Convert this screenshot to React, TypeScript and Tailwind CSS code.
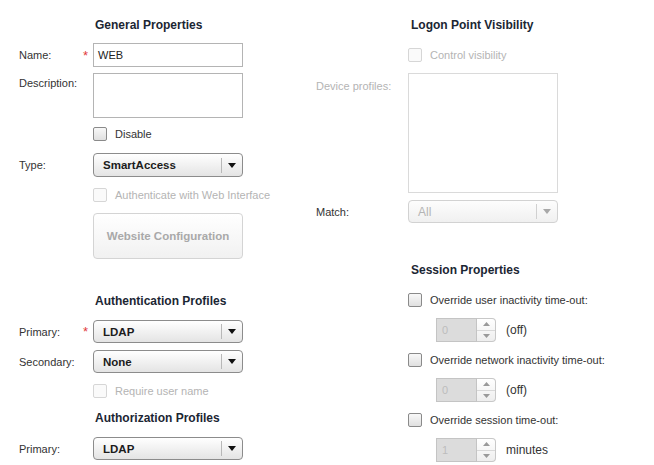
import React from 'react';

function Checkbox({ disabled }: { disabled?: boolean }) {
  return (
    <span
      className={`inline-block w-[14px] h-[14px] shrink-0 rounded-[2px] border ${
        disabled
          ? 'border-[#d6d6d6] bg-[#fafafa]'
          : 'border-[#8a8a8a] bg-linear-to-b from-[#f8f8f8] to-[#e0e0e0]'
      }`}
    />
  );
}

function CheckRow({ label, disabled }: { label: string; disabled?: boolean }) {
  return (
    <div className="flex items-center h-[14px] gap-[8px]">
      <Checkbox disabled={disabled} />
      <span className={disabled ? 'text-[#b4b4b4]' : 'text-[#333]'}>{label}</span>
    </div>
  );
}

function Select({ value, disabled, tall }: { value: string; disabled?: boolean; tall?: boolean }) {
  return (
    <div
      className={`flex items-center w-[150px] ${tall ? 'h-[24px]' : 'h-[23px]'} rounded-[4px] border ${
        disabled
          ? 'border-[#d2d2d2] bg-linear-to-b from-[#fdfdfd] to-[#f0f0f0]'
          : 'border-[#8c8c8c] bg-linear-to-b from-[#ffffff] to-[#e4e4e4]'
      }`}
    >
      <span className={`flex-1 pl-[9px] ${disabled ? 'text-[12px] text-[#b4b4b4]' : 'text-[11.5px] font-bold text-[#1c1c1c]'}`}>{value}</span>
      <span className={`w-px h-[15px] ${disabled ? 'bg-[#d0d0d0]' : 'bg-[#b8b8b8]'}`} />
      <span className="w-[20px] flex justify-center">
        <svg width="8" height="5" viewBox="0 0 8 5">
          <path d="M0 0h8L4 5z" fill={disabled ? '#a8a8a8' : '#111'} />
        </svg>
      </span>
    </div>
  );
}

function Spinner({ value, unit }: { value: string; unit: string }) {
  return (
    <div className="flex items-center pl-[28px]">
      <div className="w-[41px] h-[24px] border border-[#c4c4c4] bg-[#dcdcdc] pl-[5px] leading-[22px] text-[#bcbcbc]">
        {value}
      </div>
      <div className="w-[19px] h-[24px] flex flex-col border border-l-0 border-[#c8c8c8] rounded-r-[4px] bg-linear-to-b from-[#ffffff] to-[#eeeeee]">
        <span className="flex-1 flex items-center justify-center border-b border-[#d8d8d8]">
          <svg width="7" height="4" viewBox="0 0 7 4">
            <path d="M0 4h7L3.5 0z" fill="#9a9a9a" />
          </svg>
        </span>
        <span className="flex-1 flex items-center justify-center">
          <svg width="7" height="4" viewBox="0 0 7 4">
            <path d="M0 0h7L3.5 4z" fill="#9a9a9a" />
          </svg>
        </span>
      </div>
      <span className="ml-[10px] text-[12px] text-[#333]">{unit}</span>
    </div>
  );
}

function Heading({ children, indent }: { children: React.ReactNode; indent: string }) {
  return <div className={`h-[14px] leading-[14px] text-[12px] font-bold text-[#1b2633] ${indent}`}>{children}</div>;
}

function Asterisk() {
  return <span className="text-[#e23a3a] text-[13px] leading-none pr-[5px]">*</span>;
}

export default function App() {
  return (
    <div className="flex w-[654px] h-[465px] bg-white text-[11px] leading-[14px] font-['Liberation_Sans',Arial,sans-serif] overflow-hidden">
      {/* left column */}
      <div className="w-[316px] pl-[19px] flex flex-col">
        <div className="mt-[18px]">
          <Heading indent="pl-[76px]">General Properties</Heading>
        </div>

        <div className="mt-[11px] flex items-center">
          <div className="w-[74px] flex justify-between items-center text-[#333]">
            <span>Name:</span>
            <Asterisk />
          </div>
          <div className="w-[150px] h-[24px] border border-[#b4b4b4] pl-[4px] leading-[22px] text-[#222]">WEB</div>
        </div>

        <div className="mt-[6px] flex items-start">
          <div className="w-[74px] pt-[3px] text-[#333]">Description:</div>
          <div className="w-[150px] h-[45px] border border-[#b4b4b4]" />
        </div>

        <div className="mt-[9px] pl-[74px]">
          <CheckRow label="Disable" />
        </div>

        <div className="mt-[12px] flex items-center">
          <div className="w-[74px] text-[#333]">Type:</div>
          <Select value="SmartAccess" tall />
        </div>

        <div className="mt-[11px] pl-[74px]">
          <CheckRow label="Authenticate with Web Interface" disabled />
        </div>

        <div className="mt-[11px] pl-[74px]">
          <div className="w-[150px] h-[46px] flex items-center justify-center rounded-[4px] border border-[#d4d4d4] bg-linear-to-b from-[#ffffff] to-[#f1f1f1] text-[11.5px] font-bold text-[#a9a9a9]">
            Website Configuration
          </div>
        </div>

        <div className="mt-[35px]">
          <Heading indent="pl-[76px]">Authentication Profiles</Heading>
        </div>

        <div className="mt-[12px] flex items-center">
          <div className="w-[74px] flex justify-between items-center text-[#333]">
            <span>Primary:</span>
            <Asterisk />
          </div>
          <Select value="LDAP" />
        </div>

        <div className="mt-[7px] flex items-center">
          <div className="w-[74px] text-[#333]">Secondary:</div>
          <Select value="None" />
        </div>

        <div className="mt-[11px] pl-[74px]">
          <CheckRow label="Require user name" disabled />
        </div>

        <div className="mt-[13px]">
          <Heading indent="pl-[76px]">Authorization Profiles</Heading>
        </div>

        <div className="mt-[12px] flex items-center">
          <div className="w-[74px] text-[#333]">Primary:</div>
          <Select value="LDAP" />
        </div>
      </div>

      {/* right column */}
      <div className="flex-1 flex flex-col">
        <div className="mt-[18px]">
          <Heading indent="pl-[95px]">Logon Point Visibility</Heading>
        </div>

        <div className="mt-[16px] pl-[92px]">
          <CheckRow label="Control visibility" disabled />
        </div>

        <div className="mt-[11px] flex items-start">
          <div className="w-[92px] pt-[6px] text-[#b4b4b4]">Device profiles:</div>
          <div className="w-[150px] h-[120px] border border-[#dadada]" />
        </div>

        <div className="mt-[7px] flex items-center">
          <div className="w-[92px] text-[#333]">Match:</div>
          <Select value="All" disabled />
        </div>

        <div className="mt-[40px]">
          <Heading indent="pl-[95px]">Session Properties</Heading>
        </div>

        <div className="pl-[92px] flex flex-col">
          <div className="mt-[16px]">
            <CheckRow label="Override user inactivity time-out:" />
          </div>
          <div className="mt-[11px]">
            <Spinner value="0" unit="(off)" />
          </div>
          <div className="mt-[11px]">
            <CheckRow label="Override network inactivity time-out:" />
          </div>
          <div className="mt-[11px]">
            <Spinner value="0" unit="(off)" />
          </div>
          <div className="mt-[11px]">
            <CheckRow label="Override session time-out:" />
          </div>
          <div className="mt-[11px]">
            <Spinner value="1" unit="minutes" />
          </div>
        </div>
      </div>
    </div>
  );
}
